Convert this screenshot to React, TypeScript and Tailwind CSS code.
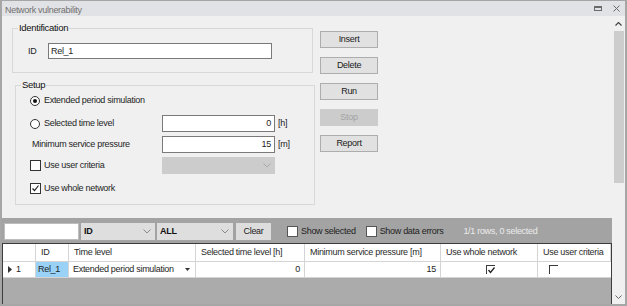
import React from 'react';

const Chevron: React.FC<{ color?: string }> = ({ color = '#8a8a8a' }) => (
  <svg width="8" height="5" viewBox="0 0 8 5">
    <path d="M0.5 0.5 L4 4 L7.5 0.5" fill="none" stroke={color} strokeWidth="1" />
  </svg>
);

const Check: React.FC = () => (
  <svg width="9" height="9" viewBox="0 0 9 9">
    <path d="M1.5 4.5 L3.5 6.5 L7.5 1.5" fill="none" stroke="#222" strokeWidth="1.2" />
  </svg>
);

const Radio: React.FC<{ checked?: boolean }> = ({ checked }) => (
  <span className="w-[10px] h-[10px] rounded-full border border-[#333] bg-white flex items-center justify-center">
    {checked && <span className="w-[4px] h-[4px] rounded-full bg-[#111]" />}
  </span>
);

const Box: React.FC<{ checked?: boolean }> = ({ checked }) => (
  <span className="w-[11px] h-[11px] border border-[#333] bg-white flex items-center justify-center">
    {checked && <Check />}
  </span>
);

const Button: React.FC<{ label: string; disabled?: boolean }> = ({ label, disabled }) => (
  <div
    className={
      disabled
        ? 'w-[58px] h-[17px] flex items-center justify-center border border-[#cccccc] bg-[#cccccc] text-[#a3a3a3]'
        : 'w-[58px] h-[17px] flex items-center justify-center border border-[#adadad] bg-[#e1e1e1] text-[#1a1a1a]'
    }
  >
    {label}
  </div>
);

const cols = [
  { label: '', w: 'w-[33px]' },
  { label: 'ID', w: 'w-[33px]' },
  { label: 'Time level', w: 'w-[127px]' },
  { label: 'Selected time level [h]', w: 'w-[109px]' },
  { label: 'Minimum service pressure [m]', w: 'w-[136px]' },
  { label: 'Use whole network', w: 'w-[97px]' },
  { label: 'Use user criteria', w: 'w-[73px]' },
];

const GridCheck: React.FC<{ checked?: boolean }> = ({ checked }) => (
  <span className="w-[9px] h-[9px] border-t border-l border-[#3a3a3a] flex items-center justify-center">
    {checked && (
      <svg width="7" height="7" viewBox="0 0 7 7">
        <path d="M0.5 3 L2.5 5.5 L6.5 0.5" fill="none" stroke="#222" strokeWidth="1.3" />
      </svg>
    )}
  </span>
);

export default function App() {
  return (
    <div className="w-[627px] h-[306px] bg-[#f0f0f0] border-t border-x-2 border-b-2 border-[#a6a6a6] flex flex-col overflow-hidden font-['Liberation_Sans',Arial,sans-serif] text-[9px] tracking-[-0.3px] text-[#1e1e1e] leading-[11px]">
      {/* title bar */}
      <div className="h-[15px] bg-[#e1e2e5] flex items-center pt-[3px] pl-[3px] pr-[5px] text-[#707070]">
        <span>Network vulnerability</span>
        <div className="ml-auto flex items-center gap-[11px] -mt-[3px]">
          <span className="w-[8px] h-[5px] border border-t-2 border-[#6a6a6a]" />
          <svg width="7" height="7" viewBox="0 0 7 7">
            <path d="M0.5 0.5 L6.5 6.5 M6.5 0.5 L0.5 6.5" stroke="#6a6a6a" strokeWidth="1" />
          </svg>
        </div>
      </div>

      <div className="flex-1 flex min-h-0">
        <div className="w-[610px] flex flex-col">
          {/* form area */}
          <div className="h-[202px] flex">
            <div className="w-[312px] flex flex-col">
              <fieldset className="ml-[10px] mt-[6px] w-[301px] border border-[#d8d8d8]">
                <legend className="ml-[5px] px-[1px] leading-[12px] text-[9.5px] text-[#111]">Identification</legend>
                <div className="pt-[9px] pb-[13px] pl-[15px] flex items-center">
                  <span className="w-[20px] h-[16px] flex items-center">ID</span>
                  <div className="w-[224px] h-[16px] border border-[#7a7a7a] bg-white flex items-center pl-[2px]">Rel_1</div>
                </div>
              </fieldset>

              <fieldset className="ml-[13px] mt-[6px] w-[300px] border border-[#d8d8d8]">
                <legend className="ml-[5px] px-[1px] leading-[12px] text-[9.5px] text-[#111]">Setup</legend>
                <div className="pt-[1px] pb-[7px] pl-[14px]">
                  <div className="h-[17px] flex items-center gap-[4px]">
                    <Radio checked />
                    <span>Extended period simulation</span>
                  </div>
                  <div className="mt-[6px] h-[17px] flex items-center">
                    <div className="w-[132px] flex items-center gap-[4px]">
                      <Radio />
                      <span>Selected time level</span>
                    </div>
                    <div className="w-[113px] h-[17px] border border-[#7a7a7a] bg-white flex items-center justify-end pr-[3px]">0</div>
                    <span className="ml-[3px]">[h]</span>
                  </div>
                  <div className="mt-[4px] h-[17px] flex items-center">
                    <span className="w-[132px] pl-[2px]">Minimum service pressure</span>
                    <div className="w-[113px] h-[17px] border border-[#7a7a7a] bg-white flex items-center justify-end pr-[3px]">15</div>
                    <span className="ml-[3px]">[m]</span>
                  </div>
                  <div className="mt-[4px] h-[17px] flex items-center">
                    <div className="w-[132px] flex items-center gap-[3px]">
                      <Box />
                      <span>Use user criteria</span>
                    </div>
                    <div className="w-[113px] h-[17px] bg-[#cccccc] flex items-center justify-end pr-[4px]">
                      <Chevron color="#a8a8a8" />
                    </div>
                  </div>
                  <div className="mt-[6px] h-[17px] flex items-center gap-[3px]">
                    <Box checked />
                    <span>Use whole network</span>
                  </div>
                </div>
              </fieldset>
            </div>

            <div className="ml-[6px] mt-[15px] flex flex-col gap-[9px]">
              <Button label="Insert" />
              <Button label="Delete" />
              <Button label="Run" />
              <Button label="Stop" disabled />
              <Button label="Report" />
            </div>
          </div>

          {/* toolbar */}
          <div className="h-[25px] bg-[#a3a3a3] flex items-center pl-[2px] pt-[2px]">
            <div className="w-[75px] h-[17px] bg-white border border-[#bdbdbd]" />
            <div className="ml-[2px] w-[74px] h-[17px] bg-[#dedede] flex items-center pl-[3px] pr-[4px] font-bold text-[#111]">
              <span>ID</span>
              <span className="ml-auto"><Chevron /></span>
            </div>
            <div className="ml-[2px] w-[76px] h-[17px] bg-[#dedede] flex items-center pl-[3px] pr-[4px] font-bold text-[#111]">
              <span>ALL</span>
              <span className="ml-auto"><Chevron /></span>
            </div>
            <div className="ml-[3px] w-[35px] h-[17px] bg-[#dddddd] flex items-center justify-center text-[#222]">Clear</div>
            <div className="ml-[16px] flex items-center gap-[3px] text-[#1e1e1e]">
              <span className="w-[11px] h-[11px] bg-white border border-[#555]" />
              <span>Show selected</span>
            </div>
            <div className="ml-[10px] flex items-center gap-[3px] text-[#1e1e1e]">
              <span className="w-[11px] h-[11px] bg-white border border-[#555]" />
              <span>Show data errors</span>
            </div>
            <span className="ml-[20px] text-[#ececec]">1/1 rows, 0 selected</span>
          </div>

          {/* grid */}
          <div className="flex-1 bg-[#ababab] border-t border-l border-r border-[#3c3c3c] flex flex-col">
            <div className="h-[18px] bg-white flex border-b border-[#d4d4d4]">
              {cols.map((c, i) => (
                <div key={i} className={`${c.w} h-full flex items-center pl-[5px] border-r border-[#d4d4d4] text-[#2a2a2a]`}>
                  {c.label}
                </div>
              ))}
            </div>
            <div className="h-[16px] bg-white flex border-b border-[#d4d4d4]">
              <div className="w-[33px] flex items-center pl-[5px] gap-[4px] border-r border-[#d4d4d4]">
                <svg width="4" height="7" viewBox="0 0 4 7"><path d="M0 0 L4 3.5 L0 7 Z" fill="#333" /></svg>
                <span>1</span>
              </div>
              <div className="w-[33px] flex items-center pl-[2px] bg-[#99d1f7] border-r border-[#d4d4d4]">Rel_1</div>
              <div className="w-[127px] flex items-center pl-[4px] pr-[5px] border-r border-[#d4d4d4]">
                <span>Extended period simulation</span>
                <svg className="ml-auto" width="5" height="3" viewBox="0 0 5 3"><path d="M0 0 L5 0 L2.5 3 Z" fill="#333" /></svg>
              </div>
              <div className="w-[109px] flex items-center justify-end pr-[4px] border-r border-[#d4d4d4]">0</div>
              <div className="w-[136px] flex items-center justify-end pr-[4px] border-r border-[#d4d4d4]">15</div>
              <div className="w-[97px] flex items-center pl-[45px] border-r border-[#d4d4d4]">
                <GridCheck checked />
              </div>
              <div className="w-[73px] flex items-center pl-[11px]">
                <GridCheck />
              </div>
            </div>
          </div>
        </div>

        {/* scrollbar */}
        <div className="w-[13px] bg-[#f0f0f0] flex flex-col items-center">
          <div className="h-[15px] flex items-center justify-center">
            <svg width="7" height="4" viewBox="0 0 7 4"><path d="M0.5 3.5 L3.5 0.5 L6.5 3.5" fill="none" stroke="#444" strokeWidth="1.2" /></svg>
          </div>
          <div className="w-[10px] h-[152px] bg-[#cdcdcd]" />
          <div className="mt-auto h-[14px] flex items-center justify-center">
            <svg width="7" height="4" viewBox="0 0 7 4"><path d="M0.5 0.5 L3.5 3.5 L6.5 0.5" fill="none" stroke="#666" strokeWidth="1" /></svg>
          </div>
        </div>
      </div>
    </div>
  );
}
